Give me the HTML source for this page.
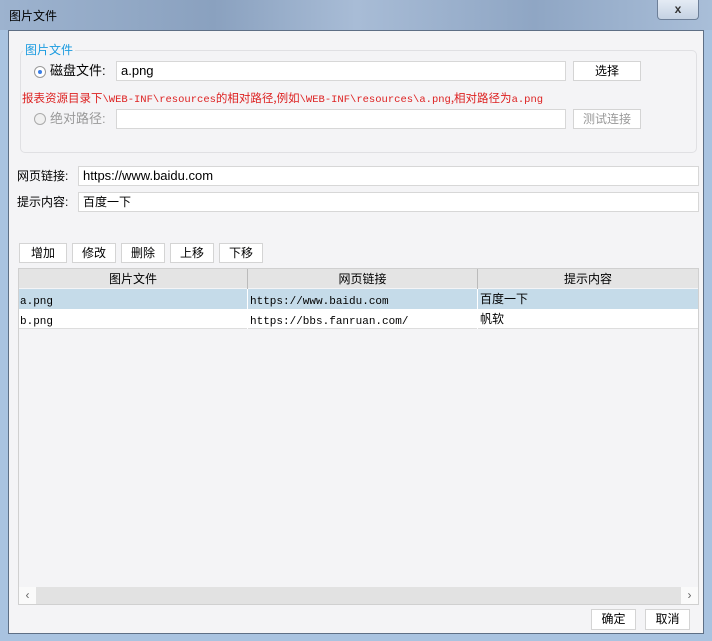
<!DOCTYPE html><html><head><meta charset="utf-8"><style>
*{box-sizing:border-box;margin:0;padding:0}
body{width:712px;height:641px;overflow:hidden;background:#a9c3e0;font-family:"Liberation Sans","Noto Sans CJK SC",sans-serif;font-size:12px;position:relative;color:#000}
.a{position:absolute;line-height:20px;height:20px;white-space:nowrap}
.title{left:0;top:0;width:712px;height:30px;background:linear-gradient(90deg,#9db3cf,#8aa1bf 30%,#a8bcd6 50%,#8fa6c4 75%,#a9bed8)}
.panel{left:8px;top:30px;width:696px;height:604px!important;background:#f4f4f6;border:1px solid #5e6f85}
.inp{background:#fff;border:1px solid #d7d7d7;padding:0 4px;font-size:13px;line-height:18px}
.btn{background:#fff;border:1px solid #d4d4d4;text-align:center;line-height:18px;font-size:12px}
.mono{font-family:"Liberation Mono","Noto Sans CJK SC",monospace;font-size:11px}
</style></head><body>
<div class="a title"></div>
<div class="a" style="left:9px;top:6px">图片文件</div>
<div class="a" style="left:657px;top:0;width:42px;height:20px;border:1px solid #6d7f98;border-top:none;border-radius:0 0 4px 4px;background:linear-gradient(#e4ebf4,#c5d2e3);text-align:center;font-weight:bold;color:#333;line-height:18px">x</div>
<div class="a panel"></div>
<div class="a" style="left:20px;top:50px;width:677px;height:103px;border:1px solid #e0e0e3;border-radius:5px"></div>
<div class="a" style="left:23px;top:40px;background:#f4f4f6;color:#1a9be0;padding:0 2px">图片文件</div>
<div class="a" style="left:34px;top:66px;width:12px;height:12px;border:1px solid #999;border-radius:50%;background:#fff"><div style="margin:3px;width:4px;height:4px;border-radius:50%;background:#3a7ee6"></div></div>
<div class="a" style="left:50px;top:61px;font-size:13px">磁盘文件:</div>
<div class="a inp" style="left:116px;top:61px;width:450px">a.png</div>
<div class="a btn" style="left:573px;top:61px;width:68px">选择</div>
<div class="a mono" style="left:22px;top:88px;color:#d22;font-size:10.5px"><span style="font-family:'Noto Sans CJK SC';font-size:11.5px">报表资源目录下</span>\WEB-INF\resources<span style="font-family:'Noto Sans CJK SC';font-size:11.5px">的相对路径,例如</span>\WEB-INF\resources\a.png<span style="font-family:'Noto Sans CJK SC';font-size:11.5px">,相对路径为</span>a.png</div>
<div class="a" style="left:34px;top:113px;width:12px;height:12px;border:1px solid #aaa;border-radius:50%;background:#f0f0f0"></div>
<div class="a" style="left:50px;top:109px;font-size:13px;color:#999">绝对路径:</div>
<div class="a inp" style="left:116px;top:109px;width:450px"></div>
<div class="a btn" style="left:573px;top:109px;width:68px;color:#999">测试连接</div>
<div class="a" style="left:17px;top:166px">网页链接:</div>
<div class="a inp" style="left:78px;top:166px;width:621px">https://www.baidu.com</div>
<div class="a" style="left:17px;top:192px">提示内容:</div>
<div class="a inp" style="left:78px;top:192px;width:621px;font-size:12px">百度一下</div>
<div class="a btn" style="left:19px;top:243px;width:48px">增加</div>
<div class="a btn" style="left:72px;top:243px;width:44px">修改</div>
<div class="a btn" style="left:121px;top:243px;width:44px">删除</div>
<div class="a btn" style="left:170px;top:243px;width:44px">上移</div>
<div class="a btn" style="left:219px;top:243px;width:44px">下移</div>
<div class="a" style="left:18px;top:268px;width:681px;height:337px;border:1px solid #d0d0d0;background:#f4f4f6"></div>
<div class="a" style="left:19px;top:269px;width:679px;height:19px;background:#e4e4e4"></div>
<div class="a" style="left:19px;top:269px;width:228px;text-align:center">图片文件</div>
<div class="a" style="left:247px;top:269px;width:230px;text-align:center;border-left:1px solid #bbb">网页链接</div>
<div class="a" style="left:477px;top:269px;width:221px;text-align:center;border-left:1px solid #bbb">提示内容</div>
<div class="a" style="left:19px;top:289px;width:679px;height:20px;background:#c5dbe9"></div>
<div class="a" style="left:19px;top:309px;width:679px;height:20px;background:#fff;border-bottom:1px solid #ddd"></div>
<div class="a" style="left:247px;top:289px;width:1px;height:40px;background:#fff"></div>
<div class="a" style="left:477px;top:289px;width:1px;height:40px;background:#fff"></div>
<div class="a mono" style="left:20px;top:292px">a.png</div>
<div class="a mono" style="left:250px;top:292px">https://www.baidu.com</div>
<div class="a" style="left:480px;top:289px">百度一下</div>
<div class="a mono" style="left:20px;top:312px">b.png</div>
<div class="a mono" style="left:250px;top:312px">https://bbs.fanruan.com/</div>
<div class="a" style="left:480px;top:309px">帆软</div>
<div class="a" style="left:19px;top:587px;width:679px;height:17px;background:#e2e2e2"></div>
<div class="a" style="left:19px;top:587px;width:17px;height:17px;background:#fafafa;color:#666;text-align:center;line-height:16px">‹</div>
<div class="a" style="left:681px;top:587px;width:17px;height:17px;background:#fafafa;color:#666;text-align:center;line-height:16px">›</div>
<div class="a btn" style="left:591px;top:609px;width:45px;height:21px">确定</div>
<div class="a btn" style="left:645px;top:609px;width:45px;height:21px">取消</div>
</body></html>
